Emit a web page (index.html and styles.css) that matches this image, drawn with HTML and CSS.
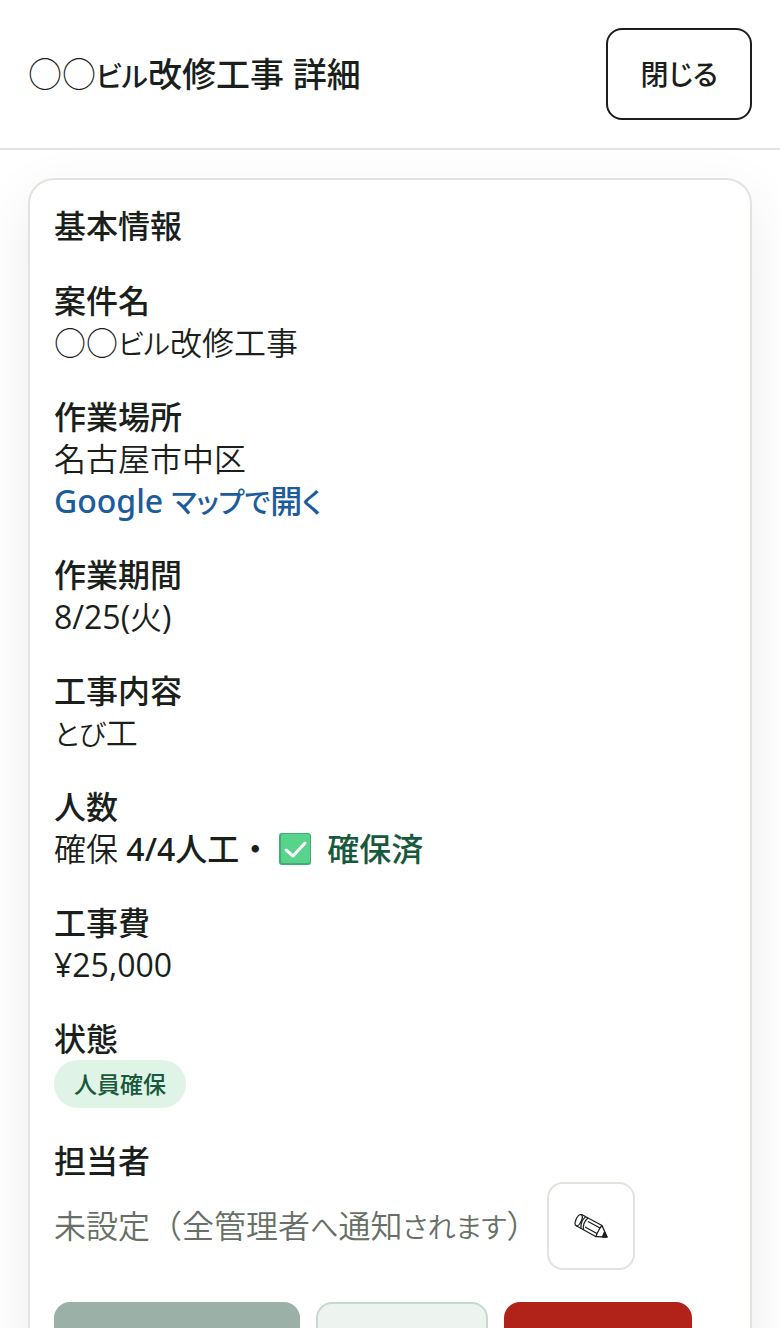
FILE: index.html
```html
<!DOCTYPE html>
<html lang="ja">

<head>
    <meta charset="UTF-8">
    <meta name="viewport" content="width=device-width, initial-scale=1.0">
    <title>案件詳細</title>
    <link rel="stylesheet" href="styles.css">
</head>

<body>
    <header class="header">
        <h1><span class="marks">○○</span><span class="kana">ビル</span>改修工事 詳細</h1>
        <button type="button" class="btn btn-close">閉<span class="kana">じる</span></button>
    </header>
    <main class="content">
        <section class="card">
            <h2>基本情報</h2>
            <dl class="info">
                <div>
                    <dt>案件名</dt>
                    <dd>○○<span class="kana">ビル</span>改修工事</dd>
                </div>
                <div>
                    <dt>作業場所</dt>
                    <dd>名古屋市中区</dd>
                    <dd><a href="#map" class="map-link">Google <span class="kana">マップで</span>開<span class="kana">く</span></a></dd>
                </div>
                <div>
                    <dt>作業期間</dt>
                    <dd><span class="num">8/25(</span>火<span class="num">)</span></dd>
                </div>
                <div>
                    <dt>工事内容</dt>
                    <dd><span class="kana">とび</span>工</dd>
                </div>
                <div>
                    <dt>人数</dt>
                    <dd class="crew">
                        <span>確保 <strong>4/4人工・</strong></span>
                        <span class="secured">
                            <!-- check mark -->
                            <svg class="check" viewBox="0 0 32 32" aria-hidden="true">
                                <rect width="32" height="32" rx="3" fill="#3fae75" />
                                <rect x="2" y="1" width="29" height="29" rx="2" fill="#58d38b" />
                                <path d="M7 17l7 6L26 10" fill="none" stroke="#fff" stroke-width="3" stroke-linecap="round" stroke-linejoin="round" />
                            </svg>
                            <strong>確保済</strong>
                        </span>
                    </dd>
                </div>
                <div>
                    <dt>工事費</dt>
                    <dd class="num">¥25,000</dd>
                </div>
                <div>
                    <dt>状態</dt>
                    <dd class="status"><span class="badge">人員確保</span></dd>
                </div>
                <div>
                    <dt>担当者</dt>
                    <dd class="manager">
                        <span>未設定（全管理者<span class="kana">へ</span>通知<span class="kana">されます</span>）</span>
                        <button type="button" class="btn btn-edit" aria-label="担当者を編集">
                            <!-- pencil -->
                            <svg class="pencil" viewBox="0 0 34 26" fill="none" stroke="#1b1f1c" stroke-width="1.3" stroke-linejoin="round" aria-hidden="true">
                                <ellipse cx="4.7" cy="7.2" rx="2.7" ry="6" transform="rotate(24 4.7 7.2)" />
                                <path d="M7.2 1.3L28 12.5L33 24L22 23.7L2.3 12.8" />
                                <path d="M11.6 3.6C8 7 6.400 11 7 15.400M14 5C10.500 8 8.800 12.500 9.500 16.800" />
                                <path d="M14 8.500L26 15M11 14L23 20.500M28 12.500L26 15L23 20.500L22 23.700" />
                                <path d="M30.500 19L28.500 23.800L33 24Z" fill="#1b1f1c" />
                            </svg>
                        </button>
                    </dd>
                </div>
            </dl>
            <div class="actions">
                <button type="button" class="btn btn-done" aria-label="完了"></button>
                <button type="button" class="btn btn-sub" aria-label="編集"></button>
                <button type="button" class="btn btn-delete" aria-label="削除"></button>
            </div>
        </section>
    </main>
</body>

</html>
```
FILE: styles.css
```css
* {
    margin: 0;
    padding: 0;
    box-sizing: border-box;
}

body {
    display: flex;
    flex-direction: column;
    height: 100vh;
    background: #fff;
    color: #1b1f1c;
    font-family: "Noto Sans", "Noto Sans CJK JP", sans-serif;
    font-size: 32px;
    line-height: 42px;
    font-weight: 350;
}

/* Proportional kana, a bit smaller than the kanji */
.kana {
    font-size: 28px;
    line-height: 1;
    font-feature-settings: "palt";
}

.num {
    font-family: "Open Sans", sans-serif;
    font-weight: 400;
}

.header {
    display: flex;
    justify-content: space-between;
    align-items: center;
    flex-shrink: 0;
    padding: 28px;
    background: #fff;
    border-bottom: 2px solid #dfe4dd;
}

h1 {
    font-size: 34px;
    font-weight: 500;
}

.marks {
    font-weight: 300;
}

.btn {
    height: 92px;
    border: 2px solid transparent;
    border-radius: 16px;
    background: #fff;
    color: inherit;
    font: inherit;
    cursor: pointer;
}

.btn-close {
    padding: 0 32px;
    border-color: #1b1f1c;
    font-size: 28px;
    font-weight: 500;
}

.content {
    flex: 1;
    min-height: 0;
    padding: 28px;
    overflow: hidden;
}

.card {
    padding: 24px;
    border: 2px solid #dfe4dd;
    border-radius: 26px;
    background: #fff;
    box-shadow: 0 20px 60px rgba(0, 0, 0, 0.08);
}

h2 {
    margin-bottom: 32px;
    font-size: 32px;
    line-height: 44px;
    font-weight: 500;
}

/* Info list */
.info {
    display: flex;
    flex-direction: column;
    gap: 32px;
}

dt,
strong {
    font-weight: 500;
}

.map-link {
    color: #1d5c9b;
    font-weight: 500;
    text-decoration: none;
}

.crew {
    display: flex;
    align-items: center;
    gap: 8px;
}

.secured {
    display: flex;
    align-items: center;
    gap: 16px;
    color: #17593c;
}

.check {
    width: 32px;
    height: 32px;
}

.status {
    display: flex;
}

.badge {
    padding: 0 20px;
    border-radius: 24px;
    background: #dff3e6;
    color: #17593c;
    font-size: 23px;
    line-height: 48px;
    font-weight: 500;
}

.manager {
    display: flex;
    align-items: center;
    gap: 8px;
    color: #667066;
}

.btn-edit {
    display: flex;
    justify-content: center;
    align-items: center;
    width: 88px;
    height: 88px;
    border-color: #dfe4dd;
}

.pencil {
    width: 34px;
    height: 26px;
}

.actions {
    display: flex;
    gap: 16px;
    margin-top: 32px;
}

.btn-done {
    width: 246px;
    background: #9bb1a7;
}

.btn-sub {
    width: 172px;
    border-color: #c8d8cf;
    background: #edf3ef;
}

.btn-delete {
    width: 188px;
    background: #b12318;
}
```
